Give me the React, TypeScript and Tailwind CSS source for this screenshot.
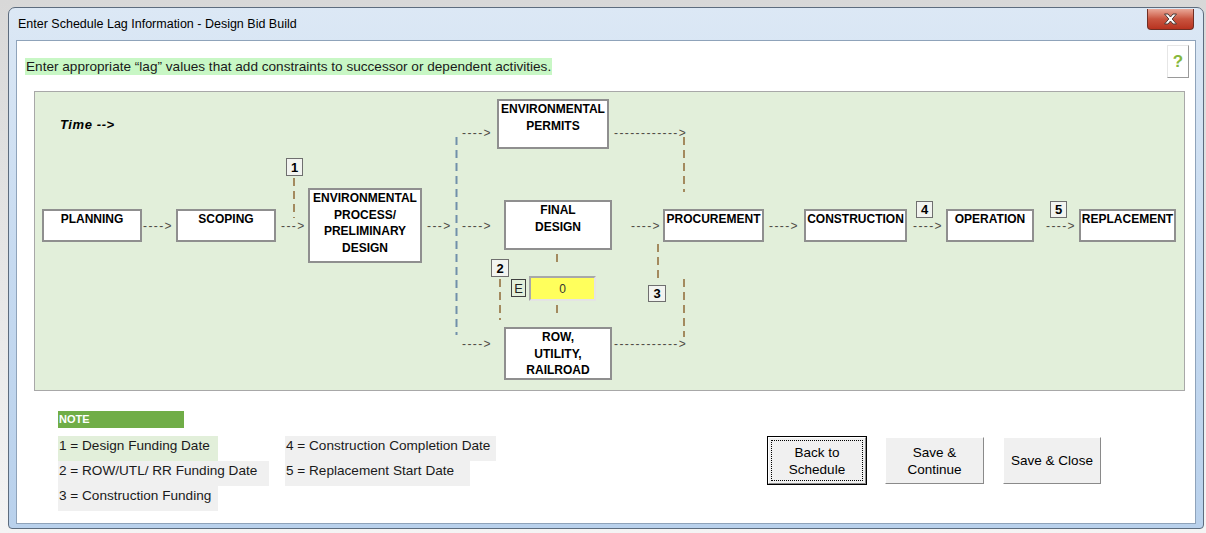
const boxes = [
  { lines: ["PLANNING"], pos: "left-[7px] top-[117px] w-[100px] h-[33px]" },
  { lines: ["SCOPING"], pos: "left-[141px] top-[117px] w-[100px] h-[33px]" },
  {
    lines: ["ENVIRONMENTAL", "PROCESS/", "PRELIMINARY", "DESIGN"],
    pos: "left-[273px] top-[96px] w-[114px] h-[75px]",
  },
  { lines: ["ENVIRONMENTAL", "PERMITS"], pos: "left-[462px] top-[7px] w-[112px] h-[50px]" },
  { lines: ["FINAL", "DESIGN"], pos: "left-[469px] top-[108px] w-[108px] h-[50px]" },
  { lines: ["ROW,", "UTILITY,", "RAILROAD"], pos: "left-[469px] top-[235px] w-[108px] h-[53px]" },
  { lines: ["PROCUREMENT"], pos: "left-[628px] top-[117px] w-[101px] h-[33px]" },
  { lines: ["CONSTRUCTION"], pos: "left-[769px] top-[117px] w-[103px] h-[33px]" },
  { lines: ["OPERATION"], pos: "left-[911px] top-[117px] w-[88px] h-[33px]" },
  { lines: ["REPLACEMENT"], pos: "left-[1044px] top-[117px] w-[97px] h-[33px]" },
];

const arrows = [
  { text: "---->", pos: "left-[108px] top-[127px]" },
  { text: "--->", pos: "left-[246px] top-[127px]" },
  { text: "--->", pos: "left-[392px] top-[127px]" },
  { text: "---->", pos: "left-[427px] top-[127px]" },
  { text: "---->", pos: "left-[427px] top-[34px]" },
  { text: "---->", pos: "left-[427px] top-[245px]" },
  { text: "------------>", pos: "left-[579px] top-[34px]" },
  { text: "------------>", pos: "left-[579px] top-[245px]" },
  { text: "---->", pos: "left-[596px] top-[127px]" },
  { text: "---->", pos: "left-[734px] top-[127px]" },
  { text: "---->", pos: "left-[878px] top-[127px]" },
  { text: "---->", pos: "left-[1011px] top-[127px]" },
];

const badges = [
  { n: "1", pos: "left-[251px] top-[66px] w-[17px] h-[18px]" },
  { n: "2", pos: "left-[456px] top-[167px] w-[18px] h-[18px]" },
  { n: "3", pos: "left-[613px] top-[193px] w-[18px] h-[17px]" },
  { n: "4", pos: "left-[881px] top-[109px] w-[17px] h-[17px]" },
  { n: "5", pos: "left-[1015px] top-[109px] w-[17px] h-[17px]" },
];

// dashed connectors: [x, y1, y2, colour]
const tan = "#a38a5e";
const blue = "#7090aa";
const links: [number, number, number, string][] = [
  [259, 86, 126, tan],
  [421.5, 45, 243, blue],
  [649, 45, 100, tan],
  [649, 187, 245, tan],
  [522, 162, 175, tan],
  [522, 213, 225, tan],
  [465, 187, 228, tan],
  [623, 152, 191, tan],
];

function Diagram() {
  return (
    <div className="relative ml-[17px] mr-[10px] h-[300px] border border-[#a8a8a8] bg-[#e2efda]">
      <svg className="pointer-events-none absolute left-0 top-0" width="1148" height="298">
        {links.map(([x, y1, y2, c], i) => (
          <line key={i} x1={x} y1={y1} x2={x} y2={y2} stroke={c} strokeWidth="2" strokeDasharray="8 5" />
        ))}
      </svg>

      <span className="absolute left-[25px] top-[25px] text-[13px] font-bold italic leading-[16px] tracking-[0.6px] text-black">
        Time --&gt;
      </span>

      {boxes.map((b) => (
        <div
          key={b.lines.join("")}
          className={`absolute ${b.pos} border-2 border-[#8f8f8f] bg-white text-center text-[12px] font-bold leading-[16.5px] text-black`}
        >
          {b.lines.map((l) => (
            <div key={l} className="whitespace-nowrap">
              {l}
            </div>
          ))}
        </div>
      ))}

      {arrows.map((a, i) => (
        <span
          key={i}
          className={`absolute ${a.pos} whitespace-nowrap text-[12px] leading-[14px] tracking-[1.4px] text-[#4f4b44]`}
        >
          {a.text}
        </span>
      ))}

      {badges.map((b) => (
        <div
          key={b.n}
          className={`absolute ${b.pos} flex items-center justify-center border border-[#6f6f6f] bg-[#f2f4f0] text-[13px] font-bold leading-none text-black`}
        >
          {b.n}
        </div>
      ))}

      <div className="absolute left-[476px] top-[187px] flex h-[18px] w-[15px] items-center justify-center border border-[#404040] text-[13px] leading-none text-[#222]">
        E
      </div>
      <div className="absolute left-[494px] top-[184px] flex h-[25px] w-[67px] items-center justify-center border-2 border-t-[#a8a8a8] border-l-[#a8a8a8] border-r-[#e4e4e4] border-b-[#e4e4e4] bg-[#ffff5c] text-[12px] text-[#333]">
        0
      </div>
    </div>
  );
}

function NoteItem({ text, w, green }: { text: string; w: string; green?: boolean }) {
  return (
    <div className={`h-[25px] ${w} ${green ? "bg-[#e2efda]" : "bg-[#f0f0f0]"} pl-[1px] pt-[1px] text-[13.6px] leading-[18px] text-[#1a1a1a] whitespace-nowrap`}>
      {text}
    </div>
  );
}

function Notes() {
  return (
    <div className="ml-[41px] w-[460px]">
      <div className="h-[17px] w-[126px] bg-[#70ad47] pl-[1px] text-[11px] font-bold leading-[17px] text-white">
        NOTE
      </div>
      <div className="mt-[8px] grid grid-cols-[227px_auto] justify-start">
        <NoteItem text="1 = Design Funding Date" w="w-[160px]" green />
        <NoteItem text="4 = Construction Completion Date" w="w-[211px]" />
        <NoteItem text="2 = ROW/UTL/ RR Funding Date" w="w-[211px]" />
        <NoteItem text="5 = Replacement Start Date" w="w-[185px]" />
        <NoteItem text="3 = Construction Funding" w="w-[160px]" />
      </div>
    </div>
  );
}

function WinButton({ label, w, focused }: { label: string[]; w: string; focused?: boolean }) {
  return (
    <div className={`${w} h-[49px] ${focused ? "border border-black" : "border border-transparent"}`}>
      <div className="flex h-full w-full items-center justify-center border border-t-white border-l-white border-r-[#8a8a8a] border-b-[#8a8a8a] bg-[#f0f0f0] p-[2px]">
        <div
          className={`flex h-full w-full flex-col items-center justify-center border ${focused ? "border-dotted border-black" : "border-transparent"} text-[13.5px] leading-[17px] text-black`}
        >
          {label.map((l) => (
            <span key={l}>{l}</span>
          ))}
        </div>
      </div>
    </div>
  );
}

export default function App() {
  return (
    <div
      className="h-[533px] w-[1206px] overflow-hidden bg-gradient-to-b from-[#d8d8d8] to-[#f4f4f4] pl-[8px] pt-[7px]"
      style={{ fontFamily: '"Liberation Sans", Arial, sans-serif' }}
    >
      <div className="flex h-[522px] w-[1196px] flex-col rounded-t-[7px] rounded-b-[4px] border border-[#5d6c7e] bg-gradient-to-b from-[#dce8f5] via-[#c6daf0] to-[#b9d1ec]">
        <div className="flex h-[32px] items-start">
          <span className="ml-[9px] mt-[8px] text-[12.5px] leading-[16px] text-black">
            Enter Schedule Lag Information - Design Bid Build
          </span>
          <div className="ml-auto mr-[9px] mt-[1px] flex h-[21px] w-[47px] items-center justify-center rounded-b-[4px] border border-t-0 border-[#6f2e24] bg-gradient-to-b from-[#e9a898] via-[#c9543f] to-[#b8321f]">
            <svg width="15" height="12" viewBox="0 0 15 12">
              <path
                d="M1.5 1h3.5l2.5 3 2.5-3h3.5l-4.3 5 4.3 5h-3.5l-2.5-3-2.5 3h-3.5l4.3-5z"
                fill="#fff"
                stroke="#4b3a36"
                strokeWidth="1"
                strokeLinejoin="round"
              />
            </svg>
          </div>
        </div>

        <div className="mx-[7px] flex h-[484px] flex-col border border-[#8fa3ba] bg-white">
          <div className="flex h-[50px] items-start">
            <span className="ml-[8px] mt-[17px] bg-[#c8f7c5] px-[1px] text-[13.6px] leading-[17px] text-[#1a1a1a]">
              Enter appropriate “lag” values that add constraints to successor or dependent activities.
            </span>
            <div className="ml-auto mr-[6px] mt-[4px] flex h-[33px] w-[22px] items-center justify-center border border-t-[#e6e6e6] border-l-[#e6e6e6] border-r-[#9a9a9a] border-b-[#9a9a9a] bg-white text-[17px] font-bold text-[#86b83c]">
              ?
            </div>
          </div>

          <Diagram />

          <div className="flex pt-[20px]">
            <Notes />
            <div className="ml-auto mr-[93px] mt-[25px] flex gap-[17px]">
              <WinButton label={["Back to", "Schedule"]} w="w-[100px]" focused />
              <WinButton label={["Save &", "Continue"]} w="w-[101px]" />
              <WinButton label={["Save & Close"]} w="w-[100px]" />
            </div>
          </div>
        </div>
      </div>
    </div>
  );
}
